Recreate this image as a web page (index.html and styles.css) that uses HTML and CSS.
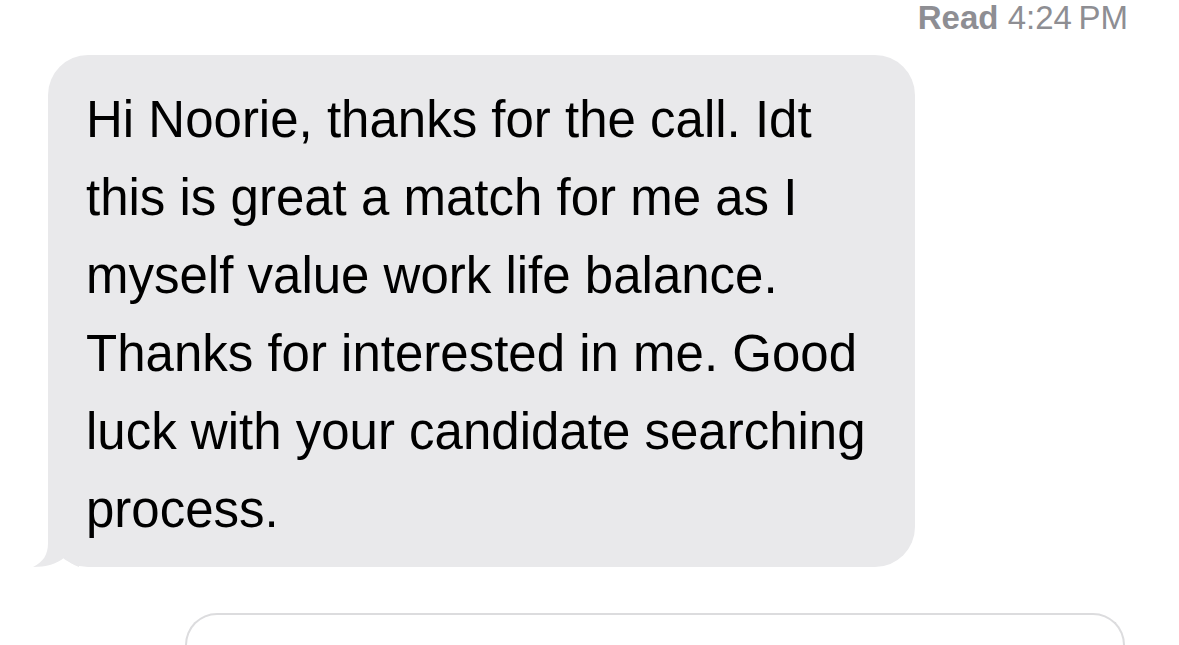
FILE: index.html
```html
<!DOCTYPE html>
<html lang="en">
<head>
<meta charset="utf-8">
<title>Messages</title>
<link rel="stylesheet" href="styles.css">
</head>
<body>
<main class="thread">
  <div class="receipt"><span class="receipt-label">Read</span> 4:24&#8201;PM</div>
  <div class="bubble-row">
    <div class="bubble">
      <p class="bubble-text">
        <span class="line">Hi Noorie, thanks for the call. Idt</span>
        <span class="line">this is great a match for me as I</span>
        <span class="line">myself value work life balance.</span>
        <span class="line">Thanks for interested in me. Good</span>
        <span class="line">luck with your candidate searching</span>
        <span class="line">process.</span>
      </p>
      <svg class="tail" width="46" height="40" viewBox="0 0 46 40" aria-hidden="true">
        <path d="M15 0 L15 16 C15 28 10 35 0 40 C13 40 24 37 32 30 C36 35 40 38 46 40 L46 0 Z" fill="#e9e9eb"/>
      </svg>
    </div>
  </div>
  <div class="composer"></div>
</main>
</body>
</html>
```
FILE: styles.css
```css
html, body {
  margin: 0;
  padding: 0;
  background: #ffffff;
}

body {
  width: 1179px;
  height: 645px;
  overflow: hidden;
  font-family: "Liberation Sans", Arial, sans-serif;
}

.thread {
  display: flex;
  flex-direction: column;
}

.receipt {
  align-self: flex-end;
  margin-right: 51px;
  height: 38px;
  font-size: 33px;
  line-height: 36px;
  color: #8e8e93;
}

.receipt-label {
  font-weight: bold;
}

.bubble-row {
  display: flex;
  padding-left: 48px;
  margin-top: 17px;
}

.bubble {
  position: relative;
  width: 867px;
  box-sizing: border-box;
  background: #e9e9eb;
  border-radius: 40px;
  padding: 26px 20px 18px 38px;
}

.bubble-text {
  margin: 0;
  font-size: 51px;
  line-height: 78px;
  color: #000000;
}

.line {
  display: block;
  white-space: nowrap;
}

.tail {
  position: absolute;
  left: -15px;
  bottom: 0;
  display: block;
}

/* input field, only its top edge is in view */
.composer {
  margin: 46px 0 0 185px;
  width: 940px;
  height: 32px;
  box-sizing: border-box;
  border: 2px solid #dcdcde;
  border-bottom: 0;
  border-radius: 36px 36px 0 0;
}
```
